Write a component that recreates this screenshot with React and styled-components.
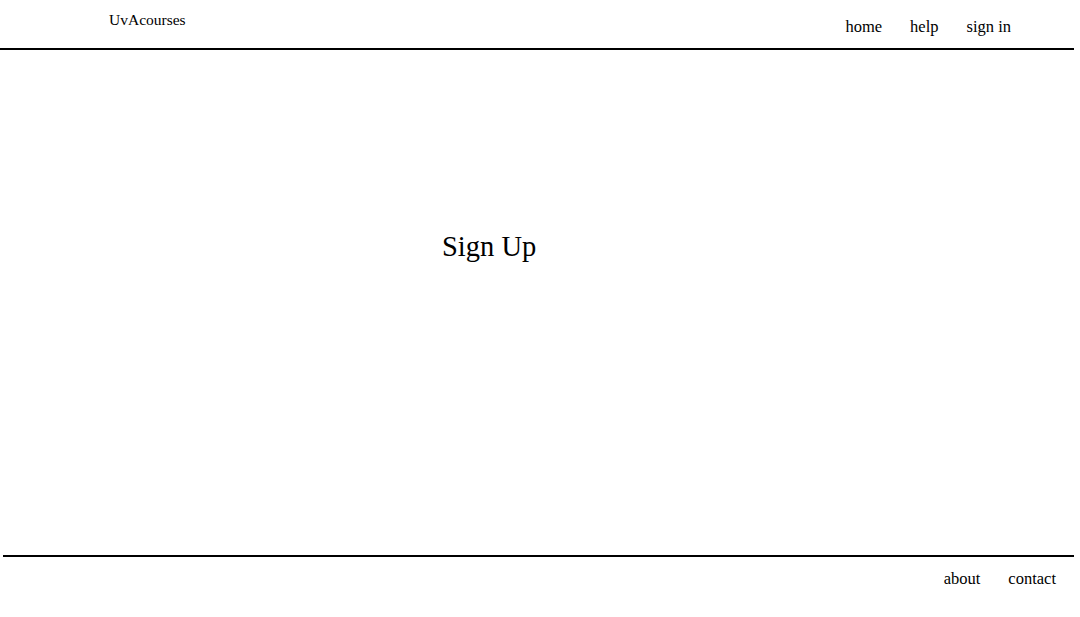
import React from "react";
import styled, { createGlobalStyle } from "styled-components";

const GlobalStyle = createGlobalStyle`
  html, body {
    margin: 0;
    padding: 0;
    background: #ffffff;
    font-family: "Liberation Serif", "DejaVu Serif", serif;
    color: #000000;
  }
`;

const Page = styled.div`
  width: 1080px;
  height: 617px;
  display: flex;
  flex-direction: column;
`;

const Header = styled.header`
  width: 1074px;
  height: 48px;
  border-bottom: 2px solid #000000;
  display: flex;
  justify-content: space-between;
  box-sizing: content-box;
`;

const Logo = styled.div`
  margin-left: 109px;
  margin-top: 11px;
  font-size: 15.5px;
  line-height: 18px;
`;

const Nav = styled.nav`
  display: flex;
  gap: 28px;
  margin-right: 63px;
  margin-top: 17px;
  font-size: 16.5px;
  line-height: 19px;
`;

const NavLink = styled.a`
  color: #000000;
  text-decoration: none;
`;

const Main = styled.main`
  height: 505px;
  padding-left: 442px;
  box-sizing: border-box;
  padding-top: 180px;
`;

const Title = styled.h1`
  margin: 0;
  font-weight: 400;
  font-size: 28.5px;
  line-height: 34px;
`;

const Footer = styled.footer`
  margin-left: 3px;
  width: 1071px;
  border-top: 2px solid #000000;
  display: flex;
  justify-content: flex-end;
  gap: 28px;
  padding-right: 18px;
  box-sizing: border-box;
  padding-top: 12px;
  font-size: 16.5px;
  line-height: 19px;
`;

const App = () => {
  return (
    <Page>
      <GlobalStyle />
      <Header>
        <Logo>UvAcourses</Logo>
        <Nav>
          <NavLink href="#">home</NavLink>
          <NavLink href="#">help</NavLink>
          <NavLink href="#">sign in</NavLink>
        </Nav>
      </Header>
      <Main>
        <Title>Sign Up</Title>
      </Main>
      <Footer>
        <NavLink href="#">about</NavLink>
        <NavLink href="#">contact</NavLink>
      </Footer>
    </Page>
  );
};

export default App;
